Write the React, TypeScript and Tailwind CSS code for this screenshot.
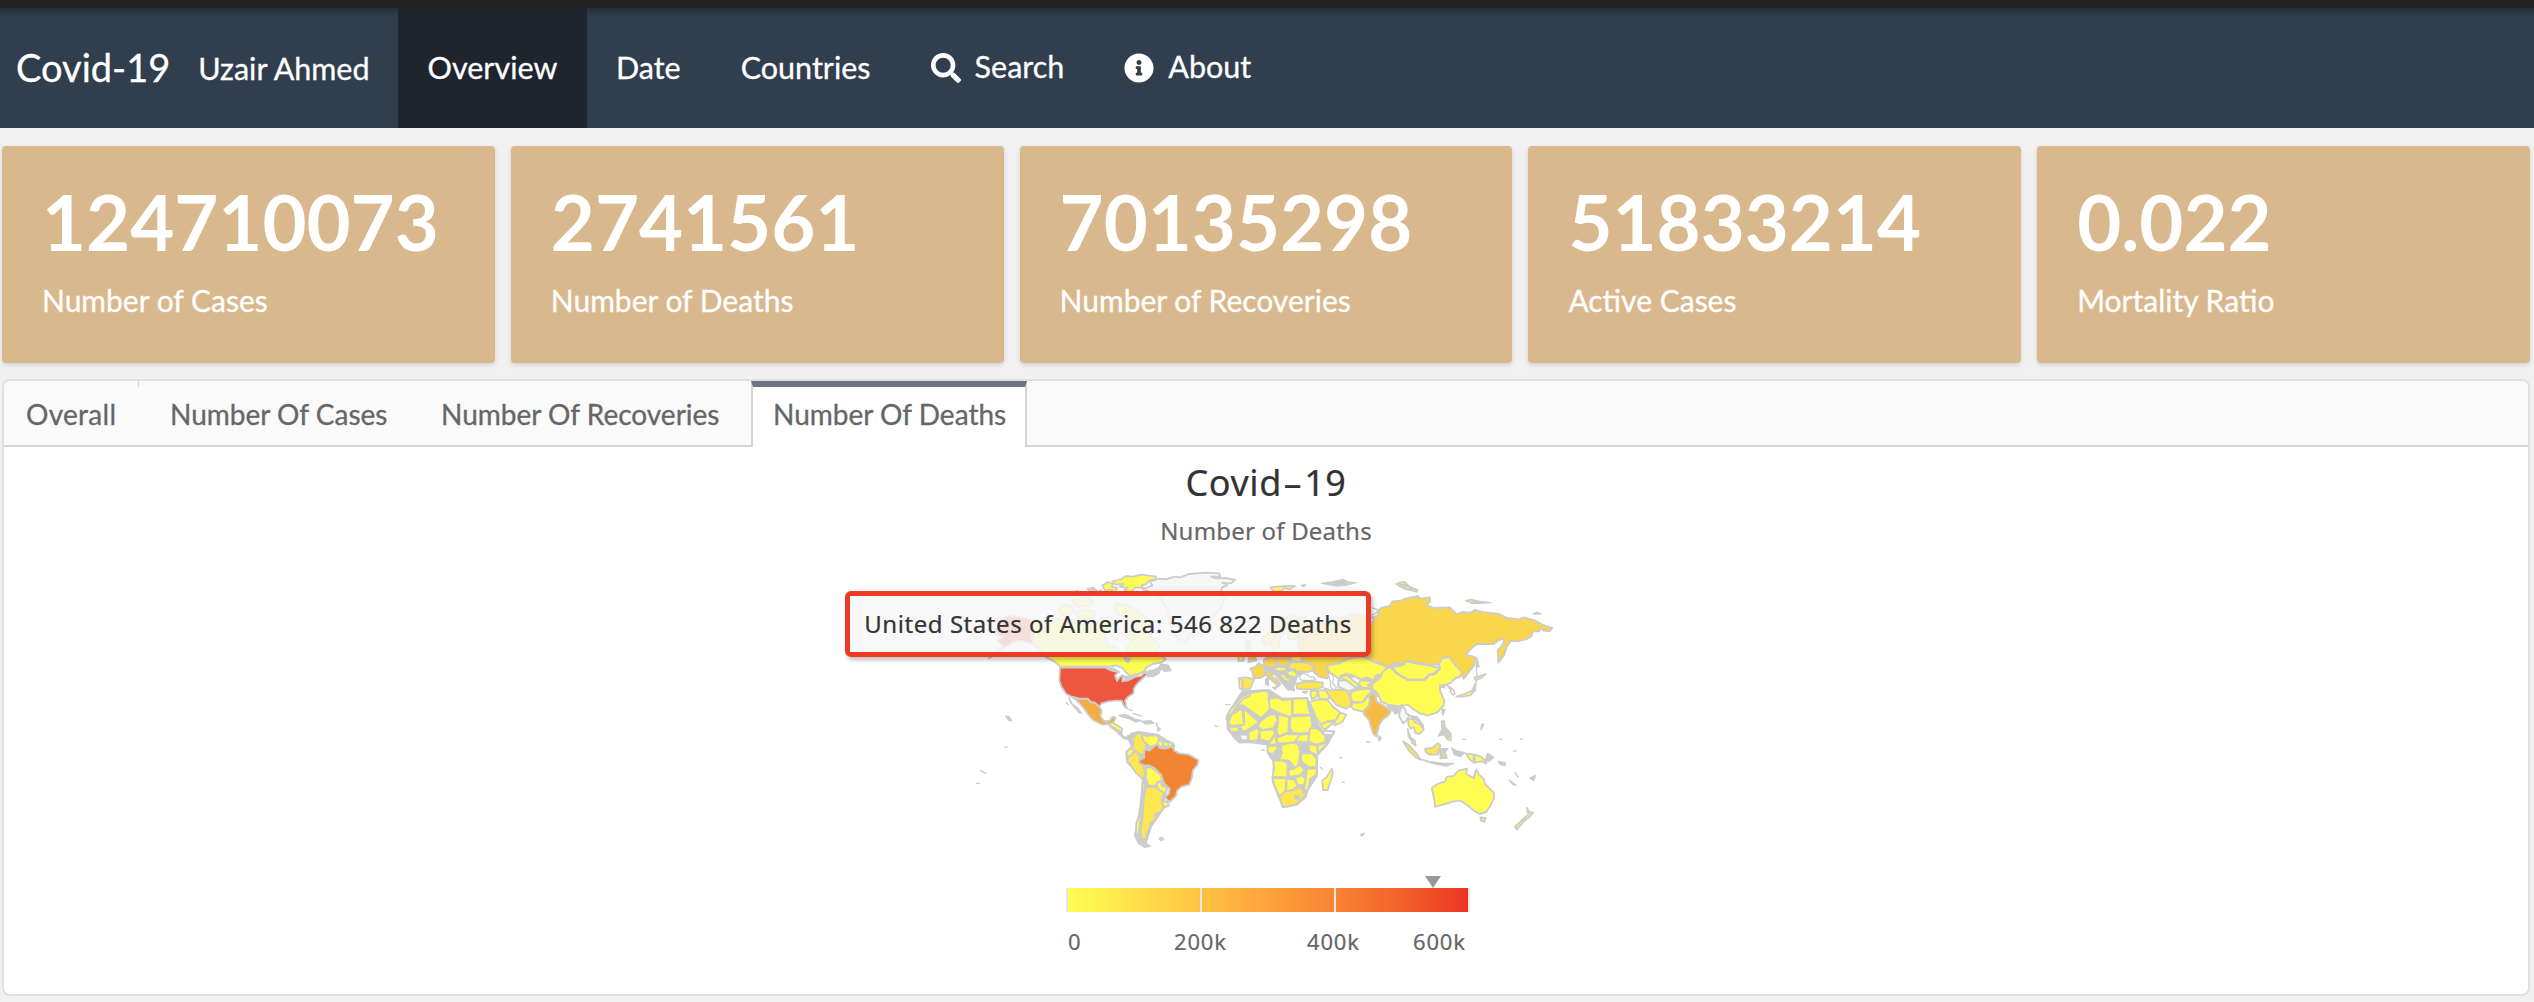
import { FaSearch, FaInfoCircle } from "react-icons/fa";

const stats = [
  { value: "124710073", label: "Number of Cases" },
  { value: "2741561", label: "Number of Deaths" },
  { value: "70135298", label: "Number of Recoveries" },
  { value: "51833214", label: "Active Cases" },
  { value: "0.022", label: "Mortality Ratio" },
];

type Shape = [fill: string, d: string];

const Y = "#fffc53";
const Y2 = "#fde64e";
const RU = "#fad64b";
const NONE = "#f7f7f7";
const G = "#cccccc";

const americas: Shape[] = [
  // Landmass beneath the South American borders
  [G, "M506 530L520 520L538 516L596 524L646 556L640 600L620 700L606 756L576 800L560 850L540 850L528 826L544 740L552 656L504 606L502 578L518 560Z"],
  // Alaska
  ["#ed5740", "M108 218L118 182L150 166L190 171L218 178L218 240L240 260L262 290L244 272L222 252L200 246L180 242L160 248L146 258L128 268L108 284L90 295L112 276L132 258L112 240L132 232L108 224Z"],
  // Canada
  [Y, "M222 176L260 186L300 176L340 186L380 180L412 192L432 172L456 172L462 190L444 214L438 236L448 258L474 266L488 288L498 292L504 262L516 248L508 218L526 204L552 216L572 228L590 244L602 258L592 272L606 288L620 298L606 308L582 312L562 322L556 334L538 342L514 348L500 336L490 324L472 316L452 320L304 320L286 304L262 292L244 268L222 248Z"],
  [Y, "M300 140L325 134L345 144L340 160L312 166L300 156Z"],
  [Y, "M340 120L372 112L402 118L396 136L360 140L344 132ZM350 156L384 148L410 156L404 174L366 178L352 168Z"],
  [Y, "M470 132L498 134L530 150L556 168L572 186L556 206L528 194L508 178L482 166L468 150Z"],
  [Y, "M430 76L448 66L462 72L458 80L474 84L468 96L452 88L440 94Z"],
  [Y, "M460 64L486 58L500 48L520 50L548 44L592 50L586 58L570 62L562 72L548 76L552 84L530 82L514 98L496 90L506 84L482 80L494 72L470 74Z"],
  // Greenland
  [NONE, "M552 88L580 76L572 66L600 56L622 58L646 50L664 52L690 42L740 38L780 40L784 50L756 50L774 56L800 54L828 60L816 70L790 68L806 76L790 82L784 100L798 118L784 146L752 180L712 206L692 226L682 248L660 244L646 218L630 186L626 152L604 114L578 98Z"],
  // Contiguous United States
  ["#ed5740", "M303 323L440 323L456 329L480 336L468 346L474 362L484 349L492 346L490 364L510 360L530 350L546 348L560 334L564 344L546 360L532 374L524 386L524 400L508 410L498 422L504 446L494 436L488 422L470 422L448 424L428 430L420 441L408 428L396 426L386 416L362 416L340 411L322 402L308 382L301 362Z"],
  // Mexico
  ["#f5ad41", "M340 411L362 417L386 417L396 427L410 430L421 441L428 452L424 468L434 483L452 482L460 471L470 472L464 486L450 492L430 494L402 480L388 464L374 444L356 424Z"],
  // Central America
  [Y, "M450 492L462 488L478 498L490 506L486 522L470 510L456 502Z"],
  // Colombia, Venezuela, Guyanas
  [Y2, "M520 536L536 518L548 522L552 542L562 550L560 568L552 586L538 580L520 566L524 548Z"],
  [Y, "M548 522L562 528L594 526L602 540L594 552L582 558L572 560L562 550L552 540Z"],
  [Y, "M602 538L612 546L612 560L602 560L596 550ZM612 546L628 546L628 560L614 560ZM628 544L642 550L634 562L628 560Z"],
  // Ecuador, Peru
  [Y, "M502 576L514 564L526 572L518 584L506 590Z"],
  [Y2, "M506 592L520 584L530 572L544 590L540 604L554 618L558 646L550 656L530 638L516 616L504 600Z"],
  // Bolivia, Paraguay, Uruguay
  [Y, "M562 622L576 622L590 632L604 644L610 660L594 668L588 678L568 676L560 654Z"],
  [Y, "M594 670L606 664L608 676L624 682L622 698L606 696L594 682Z"],
  [Y, "M612 724L624 724L630 736L616 742L610 734Z"],
  // Brazil
  ["#f28532", "M556 568L572 572L582 562L596 552L602 564L618 566L640 560L646 572L660 580L690 584L718 600L716 614L702 630L698 656L690 674L668 680L654 692L652 706L632 726L618 712L630 700L632 686L616 672L606 644L588 626L570 616L556 616L540 610L542 600L556 594Z"],
  // Argentina, Chile
  [Y2, "M562 680L588 680L604 692L616 700L608 718L614 746L606 756L588 762L590 776L576 788L572 804L562 822L564 838L548 836L544 808L550 780L552 744L556 706Z"],
  [Y, "M552 656L558 676L552 706L550 744L544 784L540 812L544 842L560 852L572 858L556 860L540 850L530 832L532 790L544 760L548 706Z"],
];

const americasInk: string[] = [
  "M330 412L340 432L356 444L368 460L360 458L346 442L334 426Z",
  "M438 484L460 500L484 514L492 528L512 536L506 526L520 530L512 540L492 534L470 512Z",
  "M480 466L500 464L530 478L548 482L530 486L510 476L488 470ZM548 484L576 482L584 490L560 492ZM592 488L596 500L604 508L596 514",
  "M510 448L520 452M522 460L546 468",
  "M566 334L582 330L600 322L606 312L628 316L636 332L616 334L606 326L600 340L582 350L566 350Z",
  "M140 468L150 470L158 482L150 482ZM138 562L145 560M64 632L80 640M52 670L62 671M600 836L608 832L614 838L606 842ZM322 428L328 434",
  "M338 100L354 92L370 100ZM384 86L404 82L414 92L394 96ZM412 94L428 90L424 98Z",
  "M442 326L462 324L480 336L462 334ZM470 348L474 364M492 346L500 360L524 350",
  "M496 292L514 296L508 308L498 302Z",
  "M544 842L572 858L556 862L540 850L530 826L538 820Z",
];

const oldWorld: Shape[] = [
  // Landmass beneath the African and European borders
  [G, "M130 394L210 390L250 416L325 414L346 470L368 514L406 514L386 552L354 586L354 648L326 690L320 712L294 734L252 742L222 668L224 606L206 578L206 554L150 546L122 548L86 508L84 466Z"],
  [G, "M196 298L310 288L346 316L342 332L310 336L292 352L288 372L268 390L236 352L224 340L200 332Z"],
  [G, "M386 316L480 296L620 310L580 400L530 408L456 440L454 400L470 390L500 352L430 350L396 340Z"],
  // Svalbard and Iceland
  [Y, "M214 82L236 80L258 78L288 78L272 88L256 84L250 90L236 96L222 92Z"],
  [Y, "M62 200L84 192L100 200L92 212L70 212Z"],
  // Scandinavia
  [Y, "M190 232L214 216L236 190L260 172L292 166L306 172L286 178L264 186L244 200L232 222L218 244L202 258L190 248Z"],
  [Y, "M218 244L232 222L246 200L264 190L262 210L244 230L240 262L226 282L218 262Z"],
  [Y, "M264 190L286 180L300 196L306 226L286 240L266 236L268 216Z"],
  // British Isles
  [RU, "M138 238L156 246L152 266L166 286L172 302L148 306L152 288L142 268Z"],
  [Y, "M118 290L132 286L134 302L118 304Z"],
  // Iberia and France
  [Y, "M120 354L132 358L130 388L122 386Z"],
  [Y2, "M122 354L142 352L166 358L160 370L154 386L132 390L130 362Z"],
  [RU, "M154 326L170 320L178 310L198 320L196 348L184 354L164 354L160 336Z"],
  // Low countries, Germany, Italy
  [RU, "M196 298L210 290L230 292L232 312L226 322L206 322L194 314Z"],
  [RU, "M196 340L214 332L222 342L216 348L232 358L244 372L238 378L222 364L206 350Z"],
  // Poland, Ukraine, Balkans
  [RU, "M232 292L262 290L272 300L268 316L244 316L232 308Z"],
  [Y, "M276 292L300 286L310 296L302 306L276 302Z"],
  [Y2, "M270 318L276 306L316 306L346 318L342 332L324 336L306 334L296 338L286 328L270 328Z"],
  [Y, "M264 336L282 330L296 342L290 352L268 348Z"],
  [Y, "M222 326L240 320L262 322L262 332L238 334Z"],
  [Y, "M240 342L256 342L262 352L276 358L270 366L256 360Z"],
  // Turkey and Caucasus
  [Y2, "M292 372L314 366L340 364L372 368L370 382L344 388L310 388L294 386Z"],
  // Russia
  [RU, "M298 170L326 176L316 190L332 202L350 186L372 190L400 176L440 172L470 160L496 166L514 188L526 184L518 172L540 166L534 156L546 144L572 138L580 124L606 122L620 116L656 108L664 116L692 112L694 124L682 136L706 144L752 142L772 162L790 156L816 158L826 150L850 156L900 162L924 174L962 178L974 172L1010 182L1030 194L1060 204L1052 214L1034 212L1026 204L1020 214L1002 214L998 228L982 238L956 244L936 242L922 262L916 284L898 308L896 272L912 252L916 236L900 240L884 252L834 252L814 268L800 284L830 292L826 316L808 338L794 356L786 338L770 316L752 292L732 292L722 314L690 314L664 310L626 302L616 314L590 308L564 322L544 310L524 304L500 292L470 292L440 298L420 310L392 316L382 322L392 336L384 356L360 350L344 336L346 318L314 304L306 290L296 262L300 226L294 196Z"],
  // Kazakhstan and central Asia
  [Y, "M386 316L420 310L444 298L470 292L500 292L524 306L544 312L564 322L558 342L530 346L524 362L504 352L484 358L462 346L444 342L424 348L424 360L408 348L396 340L386 330Z"],
  [NONE, "M418 362L440 360L466 376L468 386L448 394L418 380Z"],
  [Y, "M424 350L444 346L468 366L484 378L470 382L440 360Z"],
  [Y, "M484 360L524 364L506 376L516 384L490 384L480 374Z"],
  // Mongolia, China
  [Y, "M580 322L612 316L622 304L648 310L690 316L722 324L706 340L688 344L676 358L626 358L604 346L590 336Z"],
  [Y, "M518 374L544 352L552 334L572 320L590 338L604 348L626 360L678 360L690 346L708 342L724 326L720 312L730 294L752 292L768 314L788 336L784 350L770 354L756 368L736 376L722 376L724 394L736 422L734 436L714 458L686 466L662 460L640 446L626 434L606 440L566 434L546 424L536 400L520 386Z"],
  // Middle East
  [Y, "M336 392L354 392L354 410L338 418L334 402ZM356 392L378 390L394 410L384 418L362 416Z"],
  [Y2, "M376 384L396 392L420 388L446 392L454 416L456 436L442 446L414 436L396 416Z"],
  [Y, "M332 426L356 418L386 420L402 440L422 456L414 480L384 484L366 494L350 470Z"],
  [Y, "M366 494L386 484L406 486L380 508L370 504Z"],
  [Y, "M424 458L442 464L430 486L406 496L408 484Z"],
  [Y, "M454 400L470 390L506 386L520 392L500 412L490 428L462 426L456 416Z"],
  [Y, "M462 428L490 428L504 412L516 398L530 406L512 424L508 440L496 456L464 448L456 440Z"],
  // India and neighbours
  ["#f6bb42", "M516 402L530 406L532 424L556 438L576 452L570 464L552 478L540 496L532 530L522 520L510 480L494 462L496 450L510 438L514 424L510 410ZM592 446L610 434L608 446L594 452Z"],
  [Y2, "M538 528L546 534L540 542Z"],
  [NONE, "M606 440L618 446L622 460L632 466L622 482L612 490L600 468Z"],
  [Y, "M628 478L640 476L650 488L664 494L674 508L662 522L648 518L646 502L634 506L628 494Z"],
  // North Africa
  [Y, "M132 416L148 400L196 392L210 398L208 416L214 444L204 458L186 474L132 436L116 436Z"],
  [Y, "M82 478L92 452L116 424L130 410L150 400L154 406L134 416L116 434L98 460Z"],
  [Y, "M210 416L236 412L252 420L278 416L280 472L252 464L226 452L212 444Z"],
  [Y, "M282 416L324 416L328 440L334 464L280 464Z"],
  [Y, "M88 486L98 464L130 444L134 494L96 498Z"],
  [Y, "M134 444L180 486L164 498L134 516L120 498L136 494Z"],
  [Y, "M184 484L208 466L228 462L236 480L224 504L192 510L176 500Z"],
  [Y, "M236 464L270 470L268 516L240 530L232 512L238 486Z"],
  [Y, "M274 470L336 466L340 496L330 518L302 520L280 518L272 500Z"],
  [Y, "M88 502L116 500L122 514L98 516Z"],
  [NONE, "M122 524L146 524L146 540L128 542Z"],
  [Y, "M148 516L174 504L182 516L176 540L150 544Z"],
  [Y, "M182 512L224 508L228 522L212 544L182 538Z"],
  [Y, "M212 548L228 522L234 552L208 556Z"],
  [Y, "M232 534L264 522L304 524L288 546L256 550L236 550Z"],
  [Y, "M302 524L330 522L328 548L300 546L290 542Z"],
  // East Africa
  [Y, "M332 506L354 504L378 526L380 546L350 554L328 544Z"],
  [NONE, "M368 512L406 514L400 526L376 524Z"],
  [Y, "M404 518L384 550L358 580L356 558L382 546Z"],
  [Y, "M328 552L354 556L356 586L330 574Z"],
  // Central and southern Africa
  [Y, "M206 560L230 556L238 564L220 584L206 576Z"],
  [Y, "M246 556L276 548L298 552L304 578L298 618L286 622L270 602L240 600L248 580Z"],
  [Y, "M306 580L340 580L352 596L352 622L328 620L308 606Z"],
  [Y, "M222 602L250 602L266 610L264 652L220 650L226 624Z"],
  [Y, "M268 630L288 624L302 614L318 630L302 646L270 650Z"],
  [Y, "M324 626L354 626L352 644L334 656L326 692L316 688L320 658Z"],
  [Y, "M220 654L262 654L260 688L252 708L240 706L228 680Z"],
  [Y, "M262 658L286 658L296 678L280 690L262 694Z"],
  [Y, "M288 654L308 646L320 656L314 674L296 676Z"],
  [Y2, "M242 708L260 694L284 690L302 680L312 692L318 706L296 730L268 740L250 738Z"],
  [Y, "M398 626L402 640L386 690L372 690L370 662L384 650Z"],
  // South-east Asia
  [Y2, "M612 544L628 554L652 580L666 600L650 592L630 572Z"],
  [Y, "M636 536L648 544L650 556L640 550Z"],
  [Y2, "M678 566L700 564L716 550L724 556L716 584L692 584L680 576Z"],
  [Y, "M800 580L824 584L824 608L812 598ZM826 584L846 590L858 602L862 610L846 604L828 608Z"],
  // Japan
  [Y, "M772 410L796 402L820 392L828 374L828 390L814 406L790 410ZM826 352L838 350L860 342L846 354L830 360Z"],
  // Australia
  [Y, "M698 684L716 672L738 664L744 650L764 648L778 632L804 626L802 642L824 654L832 628L840 644L854 656L858 672L886 700L884 716L876 734L862 756L842 762L824 752L808 738L786 722L764 724L732 734L708 740L706 720Z"],
  [Y, "M844 772L860 774L856 786L846 782Z"],
  [Y, "M984 744L990 756L1002 758L992 770L972 786L954 808L948 800L970 780L988 764Z"],
];

const oldWorldInk: string[] = [
  "M306 76L320 74L314 80ZM368 70L400 66L432 58L446 66L472 68L440 76L410 78Z",
  "M590 72L604 66L618 66L630 78L658 90L652 96L634 90L618 88Z",
  "M800 122L816 118L842 124L876 128L844 130L818 130ZM1002 162L1014 156L1026 162Z",
  "M520 144L540 150M516 166L534 158",
  "M834 292L840 320L832 322ZM832 326L834 350M834 362L828 372L830 390",
  "M722 384L734 374L738 384",
  "M728 448L738 448L732 466ZM728 484L736 482L738 500L756 520L756 542L744 538L736 524L718 528L728 510Z",
  "M660 596L690 604L730 610L764 610L742 618L700 610ZM722 566L746 566L738 576L744 594L724 596ZM758 564L772 572L796 578L784 590L766 584Z",
  "M866 580L884 592L870 604L858 602ZM898 604L918 608L920 616L904 614ZM848 494L854 492L846 510ZM948 638L956 648L958 652ZM930 660L952 676L942 674ZM992 654L1010 646L1004 662Z",
  "M792 538L800 538M902 538L908 538M964 538L970 537M944 574L952 572M502 546L512 546M422 592L428 594M430 666L436 667M484 824L496 820L490 828ZM364 622L370 628M48 496L54 500M80 434L92 434M188 570L196 570",
  "M566 436L590 436L604 446L600 458L588 462L580 450L568 446Z",
  "M626 506L634 530L646 540L640 544L628 530Z",
  "M634 468L654 470L672 494L674 510L664 490L648 478Z",
  "M200 356L208 354L208 376L200 374ZM220 382L236 380L228 388ZM266 376L284 374L286 392L276 390ZM310 396L326 394L320 400Z",
  "M288 708L300 706L300 718L288 716ZM300 560L320 558L322 572L304 578ZM328 554L330 574",
  "M96 520L116 520L124 536L116 544L104 532Z",
];

// Light strokes drawn over the ink: islands with a visible interior
const isletFills: string[] = [
  "M606 70L614 70M622 82L628 84M642 90L648 91M814 124L822 124M732 490L734 494M750 534L752 538M732 580L736 588M852 780L854 780",
];

// Water bodies enclosed by the landmass shapes
const water: string[] = [
  "M300 350L312 340L326 344L330 350L346 352L350 360L330 362L306 360Z",
  "M386 338L400 344L404 358L400 368L412 382L408 390L396 384L394 364Z",
];

// Korea
const korea: string[] = ["M744 376L750 380L762 388L768 402L762 404L754 396L756 388Z"];

function WorldMap() {
  return (
    <svg className="block h-[300px] w-[620px] overflow-visible" viewBox="0 0 1860 900" strokeLinejoin="round" strokeLinecap="round" stroke={G}>
      <g strokeWidth={5.5}>
        {americas.map(([fill, d]) => (
          <path key={d} d={d} fill={fill} />
        ))}
        {americasInk.map((d) => (
          <path key={d} d={d} fill={G} strokeWidth={4} />
        ))}
      </g>
      <g transform="translate(720 0)" strokeWidth={5.5}>
        {oldWorld.map(([fill, d]) => (
          <path key={d} d={d} fill={fill} />
        ))}
        {oldWorldInk.map((d) => (
          <path key={d} d={d} fill={G} strokeWidth={4} />
        ))}
        {water.map((d) => (
          <path key={d} d={d} fill="#ffffff" strokeWidth={4} />
        ))}
        {korea.map((d) => (
          <path key={d} d={d} fill="#ffffff" strokeWidth={5} />
        ))}
        {isletFills.map((d) => (
          <path key={d} d={d} fill="none" stroke={Y2} strokeWidth={4} />
        ))}
      </g>
    </svg>
  );
}

function Header() {
  return (
    <header className="flex h-32 border-t-8 border-[#222222] bg-[#303e4e] text-[30.5px] text-white [-webkit-text-stroke:0.3px_currentColor]">
      <div className="flex w-[398px] items-center bg-linear-to-b from-[#262f3b] to-[#303e4e] to-8% pl-4">
        <span className="-mt-0.5 text-[38px] leading-none">Covid-19</span>
        <span className="ml-7 mt-0.5 whitespace-nowrap">Uzair Ahmed</span>
      </div>
      <nav className="flex flex-1 bg-linear-to-b from-[#262f3b] to-[#303e4e] to-8%">
        <a className="flex w-[189px] items-center justify-center bg-[#1e252e]">Overview</a>
        <a className="flex items-center pl-[29px]">Date</a>
        <a className="flex items-center pl-[60px]">Countries</a>
        <a className="flex items-center pl-[60px]">
          <FaSearch className="mr-[14px] size-[30px]" />
          <span className="-mt-0.5">Search</span>
        </a>
        <a className="flex items-center pl-[60px]">
          <FaInfoCircle className="mr-[14px] size-[30px]" />
          <span className="-mt-0.5">About</span>
        </a>
      </nav>
    </header>
  );
}

function Tabs() {
  return (
    <div className="flex h-[66px] border-b-2 border-[#d6d6d6] bg-[#fafafa] text-[28px] leading-[66px] text-[#666666] [-webkit-text-stroke:0.3px_currentColor]">
      <div className="relative w-[135px] pl-[22px] tracking-[0.3px]">
        Overall
        <span className="absolute right-0 top-0 h-1.5 w-px bg-[#d0d0d0]" />
      </div>
      <div className="w-[271px] pl-[31px]">Number Of Cases</div>
      <div className="w-[341px] pl-[31px]">Number Of Recoveries</div>
      <div className="h-[66px] w-[276px] border-x-2 border-t-6 border-x-[#d6d6d6] border-t-[#6b7580] bg-white pl-[20px] leading-[54px]">Number Of Deaths</div>
    </div>
  );
}

function Legend() {
  return (
    <div className="w-[404px]">
      <div className="h-3 pl-[359px]">
        <div className="h-3 w-4 bg-[#999999] [clip-path:polygon(0_0,100%_0,50%_100%)]" />
      </div>
      <div className="flex h-6 justify-between bg-linear-to-r from-[#ffff54] to-[#ea3223]">
        <i className="w-0.5 bg-[#e6e6e6]" />
        <i className="w-0.5 bg-[#e6e6e6]" />
        <i className="w-0.5 bg-[#e6e6e6]" />
        <i className="w-0.5 bg-[#e6e6e6]" />
      </div>
      <div className="flex pt-[13px] text-[22px] leading-8 tracking-[0.8px] text-[#666666]">
        <span className="w-[108px] pl-0.5">0</span>
        <span className="w-[133px]">200k</span>
        <span className="w-[106px]">400k</span>
        <span>600k</span>
      </div>
    </div>
  );
}

export default function App() {
  return (
    <div className="h-[1002px] w-[2534px] overflow-hidden bg-[#f1f1f1] font-[Lato,sans-serif]">
      <Header />
      <section className="grid grid-cols-5 gap-4 pl-0.5 pr-1 pt-[18px]">
        {stats.map((s) => (
          <div key={s.label} className="h-[217px] rounded bg-[#dab88d] pl-10 text-white shadow-[0_2px_4px_rgba(34,36,38,0.15)]">
            <div className="pt-[34px] text-[76px] font-bold leading-[84px]">{s.value}</div>
            <div className="pt-[16px] text-[30px] leading-10 [-webkit-text-stroke:0.3px_currentColor]">{s.label}</div>
          </div>
        ))}
      </section>
      <section className="ml-0.5 mr-1 mt-4 h-[617px] overflow-hidden rounded-lg border-2 border-[#e0e0e0] bg-white">
        <Tabs />
        <div className="flex flex-col items-center font-['Noto_Sans',sans-serif] [-webkit-text-stroke:0.2px_currentColor]">
          <div className="pt-[11px] text-[36px] leading-[50px] tracking-[0.6px] text-[#333333]">
            Covid<span className="mx-[5px] inline-block scale-x-[1.7]">-</span>19
          </div>
          <div className="text-[24px] leading-[46px] tracking-[0.2px] text-[#666666]">Number of Deaths</div>
          <div className="relative ml-[6px] mt-[6px]">
            <WorldMap />
            <div className="absolute left-[-114px] top-[31px] flex h-[66px] w-[526px] items-center justify-center whitespace-nowrap rounded-md border-5 border-[#ec3a24] bg-[#f7f7f7]/85 text-[24px] tracking-[0.55px] text-[#333333] shadow-[2px_3px_4px_rgba(0,0,0,0.25)]">
              United States of America: 546 822 Deaths
            </div>
          </div>
          <div className="ml-1 mt-[16px]">
            <Legend />
          </div>
        </div>
      </section>
    </div>
  );
}
